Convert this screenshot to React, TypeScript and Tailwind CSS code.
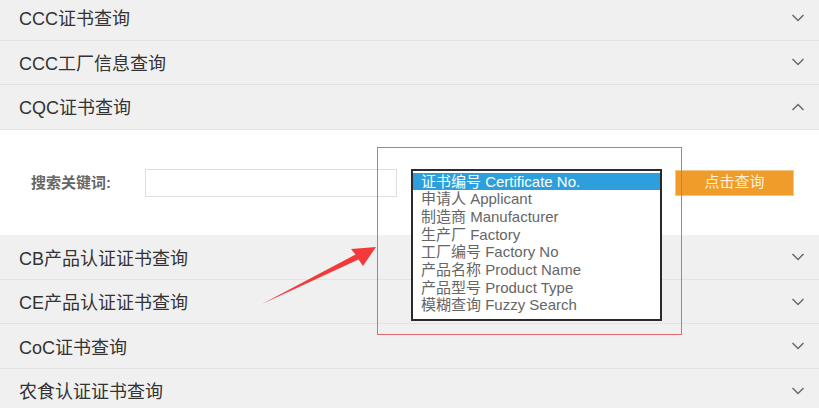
const font = { fontFamily: '"Liberation Sans", "Noto Sans CJK SC", sans-serif' }

const topRows = ["CCC证书查询", "CCC工厂信息查询"]
const bottomRows = ["CB产品认证证书查询", "CE产品认证证书查询", "CoC证书查询", "农食认证证书查询"]

const options = [
  "证书编号 Certificate No.",
  "申请人 Applicant",
  "制造商 Manufacturer",
  "生产厂 Factory",
  "工厂编号 Factory No",
  "产品名称 Product Name",
  "产品型号 Product Type",
  "模糊查询 Fuzzy Search",
]

function Chevron({ up }: { up?: boolean }) {
  return (
    <svg width="14" height="8" viewBox="0 0 14 8" fill="none" stroke="#6a6a6a" strokeWidth="1.5">
      <polyline points={up ? "1.5,7 7,1.5 12.5,7" : "1.5,1 7,6.5 12.5,1"} />
    </svg>
  )
}

function Row({ title, open }: { title: string; open?: boolean }) {
  return (
    <div className="flex h-[44.6px] items-center justify-between border-b border-[#e2e2e2] bg-[#f0f0f0] pl-[19px] pr-[14px]">
      <span className="pt-[4px] text-[18px] text-[#333]">{title}</span>
      <Chevron up={open} />
    </div>
  )
}

export default function App() {
  return (
    <div className="relative h-[408px] w-[819px] overflow-hidden bg-white" style={font}>
      <div className="-mt-[4px]">
        {topRows.map((t) => (
          <Row key={t} title={t} />
        ))}
        <Row title="CQC证书查询" open />

        <div className="flex h-[105.5px] items-center bg-white pl-[31px]">
          <span className="w-[114px] pt-[2px] text-[15px] font-bold text-[#666]">搜索关键词:</span>
          <div className="h-[28px] w-[252px] border border-[#dedede] bg-white" />
          <div className="relative ml-[14px] h-[28px] w-[251px]">
            <div className="absolute left-0 top-0 z-10 w-[251px] border-2 border-[#2a2a2a] bg-white pb-[5px] pt-[2px]">
              {options.map((o, i) => (
                <div
                  key={o}
                  className={
                    i === 0
                      ? "h-[17.7px] bg-[#2c9fdc] pl-[8px] text-[15px] leading-[17.7px] text-white"
                      : "h-[17.7px] pl-[8px] text-[15px] leading-[17.7px] text-[#666]"
                  }
                >
                  {o}
                </div>
              ))}
            </div>
          </div>
          <button className="ml-[13px] h-[26px] w-[119px] border border-[#f5c585] bg-[#f09c2a] text-[15px] text-[#fdf0dc]">
            点击查询
          </button>
        </div>

        {bottomRows.map((t) => (
          <Row key={t} title={t} />
        ))}
      </div>

      <div className="pointer-events-none absolute left-[377px] top-[147px] z-20 h-[188px] w-[305px] border-[1.5px] border-[#e36a6a]" />

      <svg className="pointer-events-none absolute left-0 top-0 z-20" width="819" height="408">
        <polygon
          points="376,247 351,249 355.5,254.5 262,304 358.5,259.5 363,266"
          fill="#f23a3a"
        />
      </svg>
    </div>
  )
}
